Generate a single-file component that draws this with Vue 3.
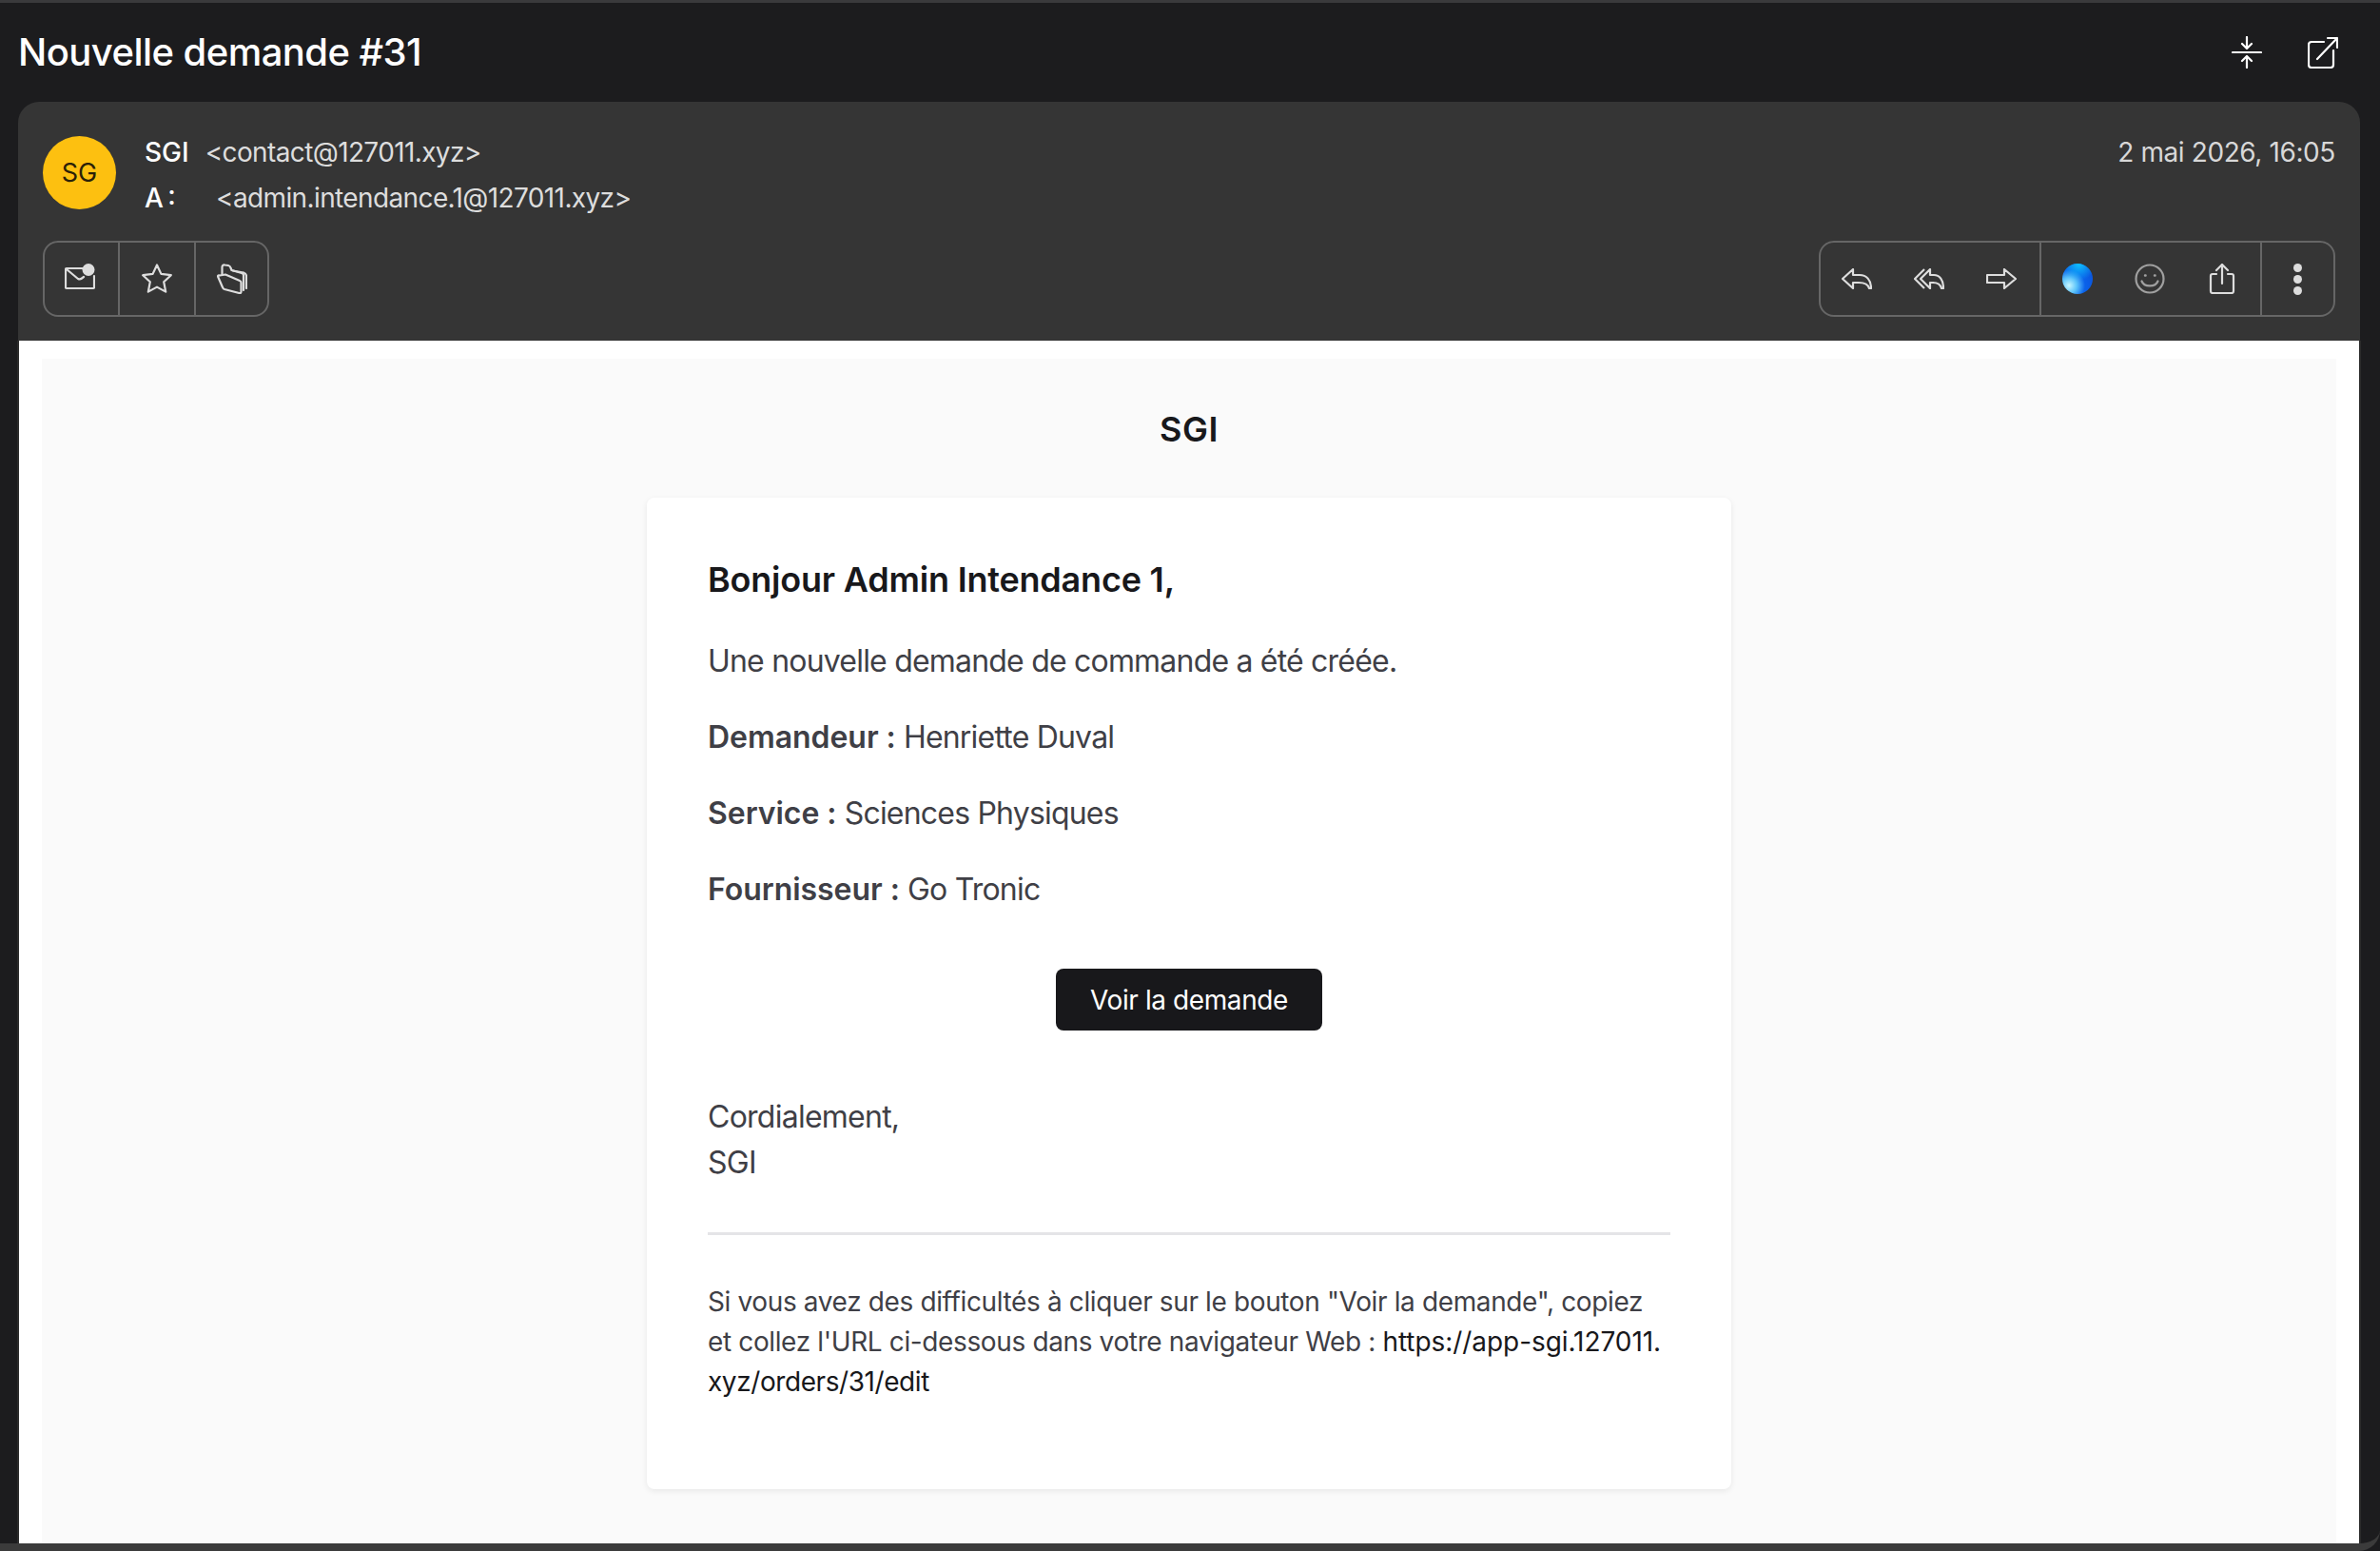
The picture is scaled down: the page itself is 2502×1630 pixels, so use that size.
<script setup>
const details = [
  { label: "Demandeur :", value: "Henriette Duval" },
  { label: "Service :", value: "Sciences Physiques" },
  { label: "Fournisseur :", value: "Go Tronic" },
];
</script>

<template>
  <div class="window">
    <header class="topbar">
      <h1 class="subject">Nouvelle demande #31</h1>
      <div class="top-actions">
        <svg width="32" height="34" viewBox="0 0 32 34" fill="none" stroke="#fff" stroke-width="2.2" stroke-linecap="round" stroke-linejoin="round">
          <path d="M1 17H31M16 1V12M11 8l5 5 5-5M16 33V22M11 26l5-5 5 5" />
        </svg>
        <svg width="32" height="34" viewBox="0 0 32 34" fill="none" stroke="#fff" stroke-width="2.2" stroke-linecap="round" stroke-linejoin="round">
          <path d="M17 6H4Q1 6 1 9V30Q1 33 4 33H24Q27 33 27 30V15M10 24L31 2M21 2H31V12" />
        </svg>
      </div>
    </header>

    <section class="mail-head">
      <div class="head-row">
        <div class="avatar">SG</div>
        <div class="addresses">
          <div class="addr-line"><strong class="sender">SGI</strong><span class="email">&lt;contact@127011.xyz&gt;</span></div>
          <div class="addr-line"><strong class="to-label">A :</strong><span class="email">&lt;admin.intendance.1@127011.xyz&gt;</span></div>
        </div>
        <div class="date">2 mai 2026, 16:05</div>
      </div>

      <div class="toolbar-row">
        <div class="tool-group">
          <button class="tool">
            <svg width="32" height="32" viewBox="0 0 32 32" fill="none" stroke="#ddd" stroke-width="2.2" stroke-linejoin="round" stroke-linecap="round">
              <path d="M19 5H2Q1 5 1 6V25Q1 26 2 26H30Q31 26 31 25V13M2 6L14 16Q16 17 18 15.5L20 14" />
              <circle cx="25" cy="6.5" r="6.5" fill="#ddd" stroke="none" />
            </svg>
          </button>
          <button class="tool">
            <svg width="32" height="32" viewBox="0 0 32 32" fill="none" stroke="#ddd" stroke-width="2.2" stroke-linejoin="round">
              <path d="M16 1.5L20.4 10.9 30.8 12.2 23.2 19.3 25.2 29.6 16 24.6 6.8 29.6 8.8 19.3 1.2 12.2 11.6 10.9Z" />
            </svg>
          </button>
          <button class="tool">
            <svg width="32" height="32" viewBox="0 0 32 32" fill="none" stroke="#ddd" stroke-width="2.2" stroke-linejoin="round" stroke-linecap="round">
              <path d="M1 13.5Q1 12 3 12.5L9 11.5 24 18Q25.5 18.5 25.5 20V29.5Q25.5 31.5 23.5 31L8 27Q6.5 26.5 6 25Z" />
              <path d="M5.5 11.5V4Q5.5 1 8.5 1.5L12 2Q14 2.5 14.5 4.5L15.5 7 26 10Q28 10.5 28 12.5V28" />
              <path d="M17 7.5L28 9.5Q31 10.5 31 13V26" />
            </svg>
          </button>
        </div>

        <div class="tool-group">
          <div class="tool-set">
            <button class="tool-small">
              <svg width="32" height="22" viewBox="0 0 32 22" fill="none" stroke="#ddd" stroke-width="2.2" stroke-linejoin="round">
                <path d="M1 11L12 1V7H19C26 7 31 12 31 21H29C28 17 24 15 18 15H12V21Z" />
              </svg>
            </button>
            <button class="tool-small">
              <svg width="32" height="22" viewBox="0 0 32 22" fill="none" stroke="#ddd" stroke-width="2.2" stroke-linejoin="round">
                <path d="M7 11L17 1V7H21C27 7 31 12 31 21H29C28 17 25 15 20 15H17V21Z" />
                <path d="M11 1L1 11 11 21" />
              </svg>
            </button>
            <button class="tool-small">
              <svg width="32" height="22" viewBox="0 0 32 22" fill="none" stroke="#ddd" stroke-width="2.2" stroke-linejoin="round">
                <path d="M1 7H19V1L31 11 19 21V15H1Z" />
              </svg>
            </button>
          </div>
          <div class="tool-set shifted">
            <button class="tool-small">
              <svg width="32" height="32" viewBox="0 0 32 32">
                <defs>
                  <radialGradient id="orb" cx="0.22" cy="0.72" r="0.85">
                    <stop offset="0" stop-color="#c8f6ff" />
                    <stop offset="0.3" stop-color="#5cc4fb" />
                    <stop offset="0.62" stop-color="#0a62ea" />
                    <stop offset="1" stop-color="#0a55dd" />
                  </radialGradient>
                  <radialGradient id="orb-top" cx="0.55" cy="0" r="0.55">
                    <stop offset="0" stop-color="#0ec4ff" />
                    <stop offset="1" stop-color="#0ec4ff" stop-opacity="0" />
                  </radialGradient>
                </defs>
                <circle cx="16" cy="16" r="16" fill="url(#orb)" />
                <circle cx="16" cy="16" r="16" fill="url(#orb-top)" />
              </svg>
            </button>
            <button class="tool-small">
              <svg width="32" height="32" viewBox="0 0 32 32" fill="none" stroke="#a0a0a0" stroke-width="2.2" stroke-linecap="round">
                <circle cx="16" cy="16" r="14.5" />
                <path d="M7.5 18.5C10 25 22 25 24.5 18.5" />
                <path d="M11 12.5h.6M21 12.5h.6" stroke-width="2.4" />
              </svg>
            </button>
            <button class="tool-small">
              <svg width="32" height="32" viewBox="0 0 32 32" fill="none" stroke="#ddd" stroke-width="2.2" stroke-linecap="round" stroke-linejoin="round">
                <path d="M10 11H6Q4 11 4 13V29Q4 31 6 31H26Q28 31 28 29V13Q28 11 26 11H22M16 21V1M10 7L16 1 22 7" />
              </svg>
            </button>
          </div>
          <button class="tool-more">
            <span class="dot"></span>
            <span class="dot"></span>
            <span class="dot"></span>
          </button>
        </div>
      </div>
    </section>

    <main class="mail-frame">
      <div class="mail-body">
        <div class="brand">SGI</div>
        <article class="card">
          <h2 class="greeting">Bonjour Admin Intendance 1,</h2>
          <p class="para intro">Une nouvelle demande de commande a été créée.</p>
          <p v-for="row in details" :key="row.label" class="para"><strong>{{ row.label }}</strong> {{ row.value }}</p>
          <div class="action"><a class="cta">Voir la demande</a></div>
          <p class="signoff">Cordialement,<br />SGI</p>
          <div class="divider"></div>
          <p class="subcopy">Si vous avez des difficultés à cliquer sur le bouton "Voir la demande", copiez et collez l'URL ci-dessous dans votre navigateur Web : <a class="link"><span class="nowrap">https://app-sgi.127011.</span><wbr />xyz/orders/31/edit</a></p>
        </article>
      </div>
    </main>
  </div>
</template>

<style>
html,
body {
  margin: 0;
  background: #1c1c1e;
}
</style>

<style scoped>
.window {
  box-sizing: border-box;
  width: 2502px;
  height: 1630px;
  overflow: hidden;
  display: flex;
  flex-direction: column;
  background: #1c1c1e;
  border-top: 3px solid #3a3a3c;
  border-bottom: 8px solid #3b3b3b;
  border-bottom-right-radius: 22px;
  font-family: Inter, "Liberation Sans", sans-serif;
}

.topbar {
  height: 104px;
  flex: none;
  display: flex;
  align-items: center;
  justify-content: space-between;
  padding: 0 44px 0 19px;
}

.subject {
  margin: 0;
  font-size: 40px;
  line-height: 48px;
  font-weight: 500;
  color: #fff;
  letter-spacing: -0.55px;
}

.top-actions {
  display: flex;
  gap: 48px;
}

.mail-head {
  flex: none;
  height: 251px;
  box-sizing: border-box;
  margin: 0 21px 0 19px;
  padding: 36px 26px 0 26px;
  background: #353535;
  border-radius: 22px 22px 0 0;
  color: #ddd;
}

.head-row {
  display: flex;
  align-items: flex-start;
  height: 110px;
}

.avatar {
  width: 77px;
  height: 77px;
  flex: none;
  border-radius: 50%;
  background: #fdc010;
  color: #2a2108;
  display: flex;
  align-items: center;
  justify-content: center;
  font-size: 27px;
}

.addresses {
  flex: 1;
  margin-left: 30px;
  margin-top: -7px;
}

.addr-line {
  height: 48px;
  line-height: 48px;
  font-size: 28px;
  display: flex;
}

.sender {
  font-weight: 500;
  color: #fff;
  margin-right: 17px;
}

.to-label {
  width: 75px;
  flex: none;
  font-weight: 500;
  color: #fff;
  word-spacing: -3px;
}

.email {
  color: #ddd;
  letter-spacing: -0.62px;
}

.date {
  font-size: 28px;
  line-height: 48px;
  margin-top: -7px;
  color: #d8d8d8;
  letter-spacing: -0.4px;
}

.toolbar-row {
  display: flex;
  justify-content: space-between;
}

.tool-group {
  display: flex;
  height: 80px;
  box-sizing: border-box;
  border: 2px solid #666;
  border-radius: 16px;
}

button {
  border: none;
  padding: 0;
  background: none;
  display: flex;
  align-items: center;
  justify-content: center;
}

.tool {
  width: 80px;
  height: 100%;
  border-right: 2px solid #666;
}

.tool:first-child {
  width: 79px;
  padding-right: 3px;
}

.tool:last-child {
  width: 75px;
  border-right: none;
}

.tool-set {
  display: flex;
  padding-right: 2px;
  border-right: 2px solid #666;
}

.tool-set.shifted {
  padding-right: 2px;
}

.tool-small {
  width: 76px;
  height: 100%;
}

.tool-more {
  width: 75px;
  height: 100%;
  flex-direction: column;
  gap: 3px;
}

.dot {
  width: 9px;
  height: 9px;
  border-radius: 50%;
  background: #ddd;
}

.mail-frame {
  flex: 1;
  min-height: 0;
  margin: 0 22px 0 20px;
  padding: 19px 24px 0;
  background: #fff;
  box-shadow: -2px 0 0 #2b2b2b, 2px 0 0 #2b2b2b;
}

.mail-body {
  height: 100%;
  background: #fafafa;
  padding-top: 52px;
  box-sizing: border-box;
}

.brand {
  text-align: center;
  font-size: 36px;
  line-height: 44px;
  font-weight: 600;
  color: #18181b;
  margin-bottom: 50px;
  letter-spacing: 0.5px;
}

.card {
  width: 1140px;
  height: 1042px;
  box-sizing: border-box;
  margin: 0 auto;
  padding: 64px;
  background: #fff;
  border-radius: 8px;
  box-shadow: 0 2px 6px rgba(0, 0, 0, 0.08);
}

.greeting {
  margin: 0 0 40px;
  font-size: 36px;
  line-height: 44px;
  font-weight: 600;
  color: #18181b;
  letter-spacing: -0.2px;
}

.para {
  margin: 0 0 32px;
  font-size: 32px;
  line-height: 48px;
  color: #3f3f46;
  letter-spacing: -0.8px;
}

.para strong {
  font-weight: 600;
  letter-spacing: -0.05px;
}

.action {
  display: flex;
  justify-content: center;
  margin-top: 59px;
}

.cta {
  display: block;
  width: 280px;
  height: 65px;
  line-height: 67px;
  text-align: center;
  background: #18181b;
  color: #fff;
  border-radius: 8px;
  font-size: 28px;
  letter-spacing: -0.4px;
}

.signoff {
  margin: 67px 0 49px;
  font-size: 32px;
  line-height: 48px;
  color: #3f3f46;
  letter-spacing: -0.75px;
}

.divider {
  height: 3px;
  background: #e4e4e7;
}

.subcopy {
  margin: 49px 0 0;
  font-size: 28px;
  line-height: 42px;
  color: #3f3f46;
  letter-spacing: -0.37px;
}

.link {
  color: #18181b;
  letter-spacing: -0.42px;
}

.nowrap {
  letter-spacing: -0.06px;
  white-space: nowrap;
}
</style>
